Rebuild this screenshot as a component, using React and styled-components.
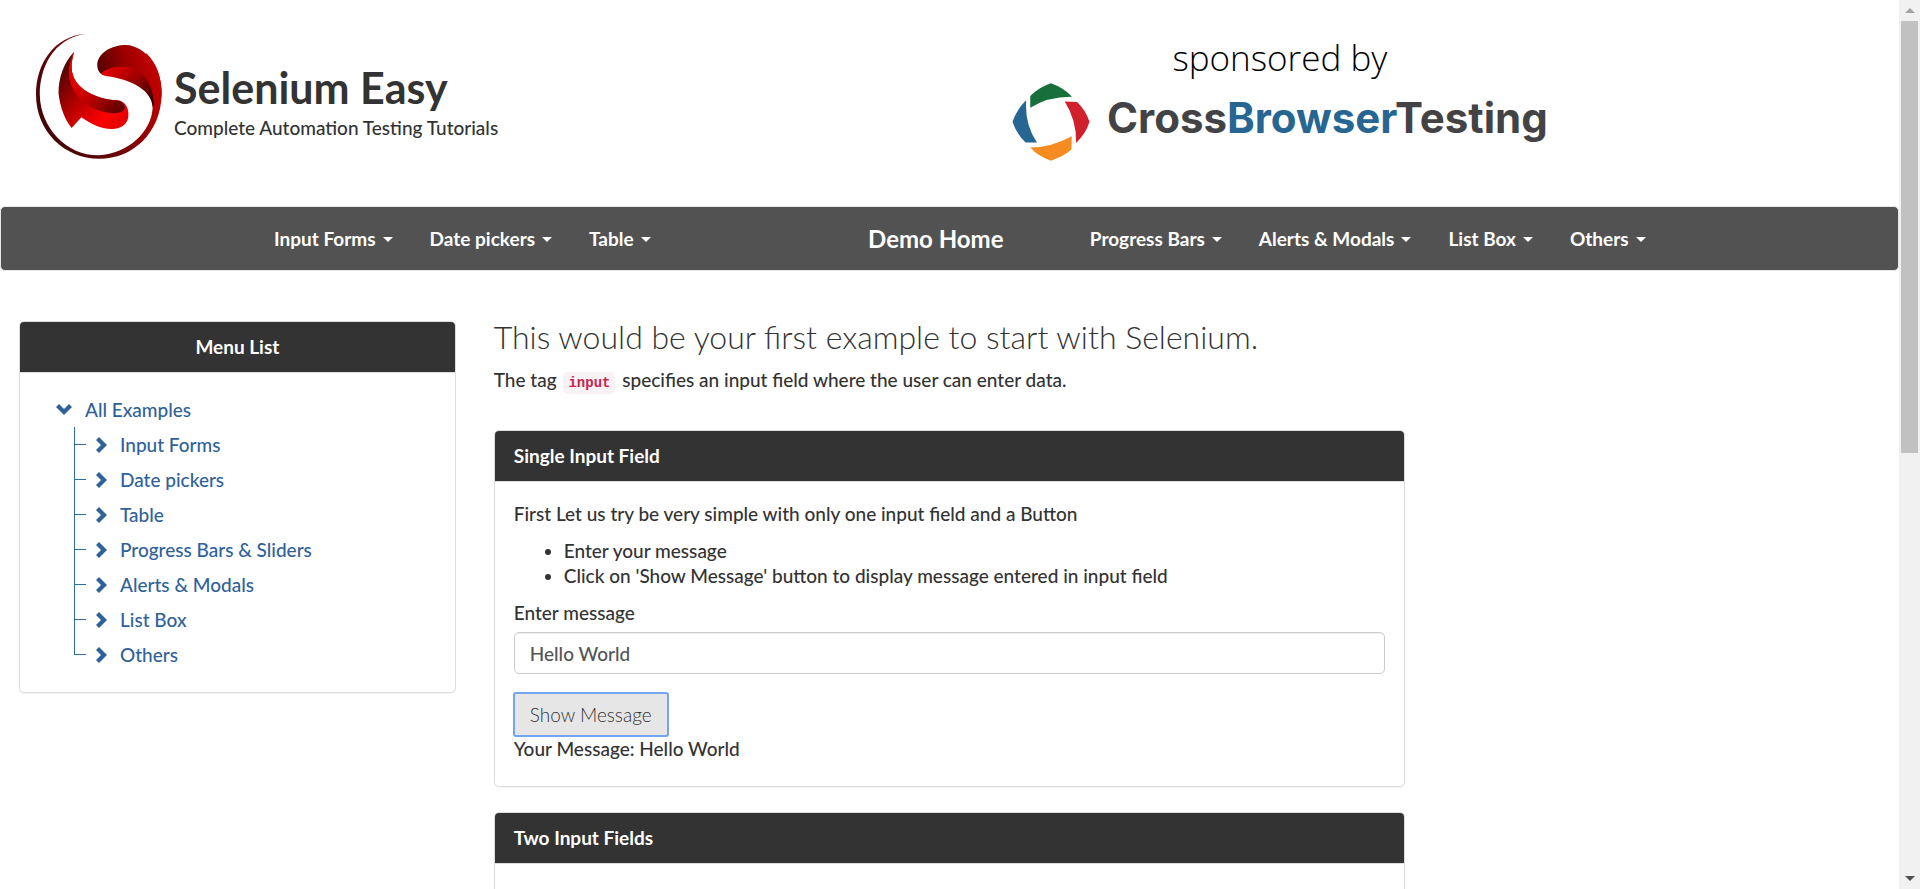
import React from "react";
import styled, { createGlobalStyle } from "styled-components";

const GlobalStyle = createGlobalStyle`
  *, *::before, *::after { box-sizing: border-box; }
  body {
    margin: 0;
    background: #fff;
    color: #333;
    font: 500 19px/25px Lato, "Liberation Sans", sans-serif;
  }
  a { text-decoration: none; }
  ul { margin: 0; padding: 0; list-style: none; }
  h1, h3, p { margin: 0; }
`;

const Window = styled.div`
  display: flex;
  height: 100vh;
`;

const Page = styled.div`
  flex: 1;
  min-width: 0;
  overflow-y: auto;
  scrollbar-width: none;
`;

/* Scroll bar */
const ScrollBar = styled.div`
  display: flex;
  flex-direction: column;
  width: 21px;
  background: #f1f1f1;
`;

const ScrollArrow = styled.span`
  display: flex;
  align-items: center;
  justify-content: center;
  height: 21px;
  &::before {
    content: "";
    border: 5px solid transparent;
    border-width: ${(p) => (p.$down ? "5px 5px 0" : "0 5px 5px")};
    border-${(p) => (p.$down ? "top" : "bottom")}-color: ${(p) => (p.$down ? "#505050" : "#a3a3a3")};
  }
`;

const ScrollTrack = styled.div`
  flex: 1;
  padding: 0 2px;
`;

const ScrollThumb = styled.div`
  height: 51%;
  background: #c1c1c1;
`;

/* Header */
const Header = styled.header`
  display: grid;
  grid-template-columns: 1012fr 887fr;
  align-items: start;
  min-height: 206px;
  padding-top: 33px;
`;

const Brand = styled.div`
  display: flex;
  gap: 12px;
  padding-left: 36px;
`;

const BrandText = styled.div`
  padding-top: 30px;
`;

const SiteName = styled.h1`
  font-size: 43px;
  font-weight: 700;
  line-height: 50px;
`;

const Tagline = styled.p`
  padding-top: 2px;
`;

const Sponsor = styled.a`
  display: inline-flex;
  flex-direction: column;
  align-items: center;
  justify-self: start;
  color: #000;
`;

const SponsorLead = styled.span`
  font: 300 35px/50px "Open Sans", sans-serif;
`;

const SponsorLogo = styled.span`
  display: flex;
  align-items: flex-start;
  gap: 17px;
`;

const SponsorName = styled.span`
  color: ${(p) => (p.$accent ? "#276692" : "#434345")};
  font: 700 42px/70px Inter, sans-serif;
`;

/* Navigation */
const NavBar = styled.nav`
  display: grid;
  grid-template-columns: 868fr 222fr 809fr;
  align-items: center;
  height: 65px;
  border: 1px solid #e7e7e7;
  border-radius: 5px;
  background: #525252;
`;

const NavGroup = styled.ul`
  display: flex;
  gap: 37px;
  padding-left: ${(p) => (p.$inset ? "273px" : "0")};
`;

const NavLink = styled.a`
  display: flex;
  align-items: center;
  gap: 7px;
  color: #fff;
  font-weight: 700;
  white-space: nowrap;
  &::after {
    content: "";
    margin-top: 2px;
    border: 5px solid transparent;
    border-width: 5px 5px 0;
    border-top-color: #fff;
  }
`;

const HomeLink = styled.a`
  color: #fff;
  font-size: 24px;
  font-weight: 700;
  white-space: nowrap;
`;

/* Content */
const Columns = styled.div`
  display: grid;
  grid-template-columns: 3fr 6fr 3fr;
  align-items: start;
  padding-top: 47px;
`;

const SideColumn = styled.aside`
  padding: 3px 19px 0;
`;

const MainColumn = styled.main`
  padding: 0 19px;
`;

const Lead = styled.h3`
  font-size: 32px;
  font-weight: 300;
  line-height: 37px;
`;

const Intro = styled.p`
  padding: 12px 0 38px;
`;

const Tag = styled.code`
  margin: 0 2px;
  padding: 3px 5px;
  border-radius: 5px;
  background: #f9f2f4;
  color: #c7254e;
  font: 700 14px/17px "Liberation Mono", monospace;
`;

const Panel = styled.section`
  margin-bottom: 25px;
  border: 1px solid #ddd;
  border-radius: 5px;
  box-shadow: 0 1px 1px rgba(0, 0, 0, 0.05);
`;

const PanelHeading = styled.div`
  padding: 12px 19px 13px;
  border-bottom: 1px solid #ddd;
  border-radius: 4px 4px 0 0;
  background: #333;
  color: #fff;
  font-weight: 700;
  text-align: ${(p) => (p.$centered ? "center" : "left")};
`;

const PanelBody = styled.div`
  padding: 19px 19px 25px;
`;

const Steps = styled.ul`
  margin: 12px 0;
  padding-left: 50px;
  list-style: disc;
`;

const Field = styled.div`
  display: flex;
  flex-direction: column;
  gap: 7px;
  margin-bottom: 19px;
`;

const TextInput = styled.input`
  width: 100%;
  height: 42px;
  padding: 0 15px;
  border: 1px solid #ccc;
  border-radius: 5px;
  box-shadow: inset 0 1px 1px rgba(0, 0, 0, 0.075);
  color: #555;
  font: inherit;
`;

const ShowButton = styled.button`
  display: block;
  height: 43px;
  padding: 0 15px;
  border: 1px solid #adadad;
  border-radius: 2px;
  outline: 2px solid #74a4f2;
  outline-offset: -1px;
  background: #e6e6e6;
  color: #333;
  font: 300 19px/25px Lato, sans-serif;
`;

/* Example tree */
const Tree = styled.div`
  padding: 19px 36px 20px;
`;

const TreeLink = styled.a`
  display: flex;
  align-items: center;
  gap: 13px;
  height: 35px;
  color: #2f6299;
`;

const Branches = styled.ul`
  padding-left: 18px;
`;

const Branch = styled.li`
  display: flex;
  gap: 10px;
  &::before {
    content: "";
    width: 12px;
    height: 18px;
    border: solid #2e6da4;
    border-width: 0 0 1px 1px;
  }
  &:not(:last-child) {
    background: linear-gradient(#2e6da4, #2e6da4) left / 1px 100% no-repeat;
  }
`;

const LogoMark = () => (
  <svg width="126" height="126" viewBox="107 100 364 378" preserveAspectRatio="none" aria-hidden="true">
    <defs>
      <linearGradient id="ring" gradientUnits="userSpaceOnUse" x1="107" y1="420" x2="470" y2="240">
        <stop offset="0" stopColor="#3a0606" />
        <stop offset=".5" stopColor="#6d0508" />
        <stop offset="1" stopColor="#cc0000" />
      </linearGradient>
      <linearGradient id="bump" x1="0" y1=".6" x2="1" y2=".3">
        <stop offset="0" stopColor="#4a0000" />
        <stop offset=".55" stopColor="#a00000" />
        <stop offset="1" stopColor="#cc0000" />
      </linearGradient>
      <linearGradient id="fold" x1="0" y1="0" x2="1" y2=".8">
        <stop offset="0" stopColor="#f40000" />
        <stop offset=".5" stopColor="#a40000" />
        <stop offset="1" stopColor="#3d0000" />
      </linearGradient>
      <linearGradient id="tail" gradientUnits="userSpaceOnUse" x1="172" y1="240" x2="350" y2="390">
        <stop offset="0" stopColor="#5c0505" />
        <stop offset=".35" stopColor="#b30000" />
        <stop offset=".75" stopColor="#ff0000" />
        <stop offset="1" stopColor="#e00000" />
      </linearGradient>
      <linearGradient id="inner" gradientUnits="userSpaceOnUse" x1="210" y1="200" x2="365" y2="330">
        <stop offset="0" stopColor="#e80000" />
        <stop offset=".4" stopColor="#d00000" />
        <stop offset="1" stopColor="#560000" />
      </linearGradient>
    </defs>
    <path fill="url(#ring)" d="M250 102C155 118 118 205 118 285C120 385 195 467 288 467C375 462 440 395 444 325C446 310 440 290 430 270L425 160C460 195 470 240 470 285C467 400 387 477 290 477C187 477 107 392 107 285C107 190 160 110 250 102Z" />
    <path fill="url(#bump)" d="M300 226C289 220 284 210 284 197C284 160 325 136 368 136C420 138 469 200 470 275C470 310 458 340 444 350C452 290 425 225 300 226Z" />
    <path fill="url(#fold)" d="M295 221C310 205 345 196 375 202C415 213 445 250 448 315L444 322C440 262 362 235 308 229Q298 227 295 221Z" />
    <path fill="url(#tail)" d="M217 156C188 188 172 232 172 280C176 322 191 362 210 385L238 353C265 373 295 389 328 388C362 386 374 365 374 345C374 320 362 303 340 302C282 298 212 268 210 205C209 190 213 172 217 156Z" />
    <path fill="url(#inner)" d="M217 156C202 184 197 225 208 255C228 310 285 339 335 341Q357 340 365 325C362 311 352 303 340 302C282 298 212 268 210 205C209 190 213 172 217 156Z" />
  </svg>
);

const SponsorMark = () => (
  <svg width="78" height="78" viewBox="37 38 232 233" aria-hidden="true">
    <path fill="#176f3b" d="M91 77Q118 50 153 39Q190 52 216 79Q145 78 91 112Z" />
    <path fill="#276692" d="M77 91L79 94Q74 160 111 216L77 216Q50 190 38 154Q50 118 77 91Z" />
    <path fill="#cf202b" d="M194 93L231 95Q257 120 268 154Q257 190 228 217Q230 150 194 93Z" />
    <path fill="#f68b21" d="M91 231Q155 230 215 197L214 237Q190 258 153 270Q115 258 91 231Z" />
  </svg>
);

const ChevronRight = () => (
  <svg width="11" height="16" viewBox="0 0 11 16" aria-hidden="true">
    <path fill="#2f6299" d="M3 0L11 8L3 16L0 13L5 8L0 3Z" />
  </svg>
);

const ChevronDown = () => (
  <svg width="16" height="11" viewBox="0 0 16 11" aria-hidden="true">
    <path fill="#2f6299" d="M0 3L3 0L8 5L13 0L16 3L8 11Z" />
  </svg>
);

const leftMenu = ["Input Forms", "Date pickers", "Table"];
const rightMenu = ["Progress Bars", "Alerts & Modals", "List Box", "Others"];
const examples = ["Input Forms", "Date pickers", "Table", "Progress Bars & Sliders", "Alerts & Modals", "List Box", "Others"];

const Menu = ({ items, inset }) => (
  <NavGroup $inset={inset}>
    {items.map((item) => (
      <li key={item}>
        <NavLink href="#">{item}</NavLink>
      </li>
    ))}
  </NavGroup>
);

export default function App() {
  return (
    <Window>
      <GlobalStyle />
      <Page>
        <Header>
          <Brand>
            <LogoMark />
            <BrandText>
              <SiteName>Selenium Easy</SiteName>
              <Tagline>Complete Automation Testing Tutorials</Tagline>
            </BrandText>
          </Brand>
          <Sponsor href="#">
            <SponsorLead>sponsored by</SponsorLead>
            <SponsorLogo>
              <SponsorMark />
              <SponsorName>
                Cross<SponsorName $accent>Browser</SponsorName>Testing
              </SponsorName>
            </SponsorLogo>
          </Sponsor>
        </Header>

        <NavBar>
          <Menu items={leftMenu} inset />
          <HomeLink href="#">Demo Home</HomeLink>
          <Menu items={rightMenu} />
        </NavBar>

        <Columns>
          <SideColumn>
            <Panel>
              <PanelHeading $centered>Menu List</PanelHeading>
              <Tree>
                <TreeLink href="#">
                  <ChevronDown />
                  All Examples
                </TreeLink>
                <Branches>
                  {examples.map((name) => (
                    <Branch key={name}>
                      <TreeLink href="#">
                        <ChevronRight />
                        {name}
                      </TreeLink>
                    </Branch>
                  ))}
                </Branches>
              </Tree>
            </Panel>
          </SideColumn>

          <MainColumn>
            <Lead>This would be your first example to start with Selenium.</Lead>
            <Intro>
              The tag <Tag>input</Tag> specifies an input field where the user can enter data.
            </Intro>

            <Panel>
              <PanelHeading>Single Input Field</PanelHeading>
              <PanelBody>
                <p>First Let us try be very simple with only one input field and a Button</p>
                <Steps>
                  <li>Enter your message</li>
                  <li>Click on 'Show Message' button to display message entered in input field</li>
                </Steps>
                <Field>
                  <label htmlFor="user-message">Enter message</label>
                  <TextInput id="user-message" type="text" defaultValue="Hello World" />
                </Field>
                <ShowButton type="button">Show Message</ShowButton>
                <p>Your Message: Hello World</p>
              </PanelBody>
            </Panel>

            <Panel>
              <PanelHeading>Two Input Fields</PanelHeading>
              <PanelBody>
                <p>Let us now try with two input fields and a button</p>
              </PanelBody>
            </Panel>
          </MainColumn>
        </Columns>
      </Page>
      <ScrollBar aria-hidden="true">
        <ScrollArrow />
        <ScrollTrack>
          <ScrollThumb />
        </ScrollTrack>
        <ScrollArrow $down />
      </ScrollBar>
    </Window>
  );
}
